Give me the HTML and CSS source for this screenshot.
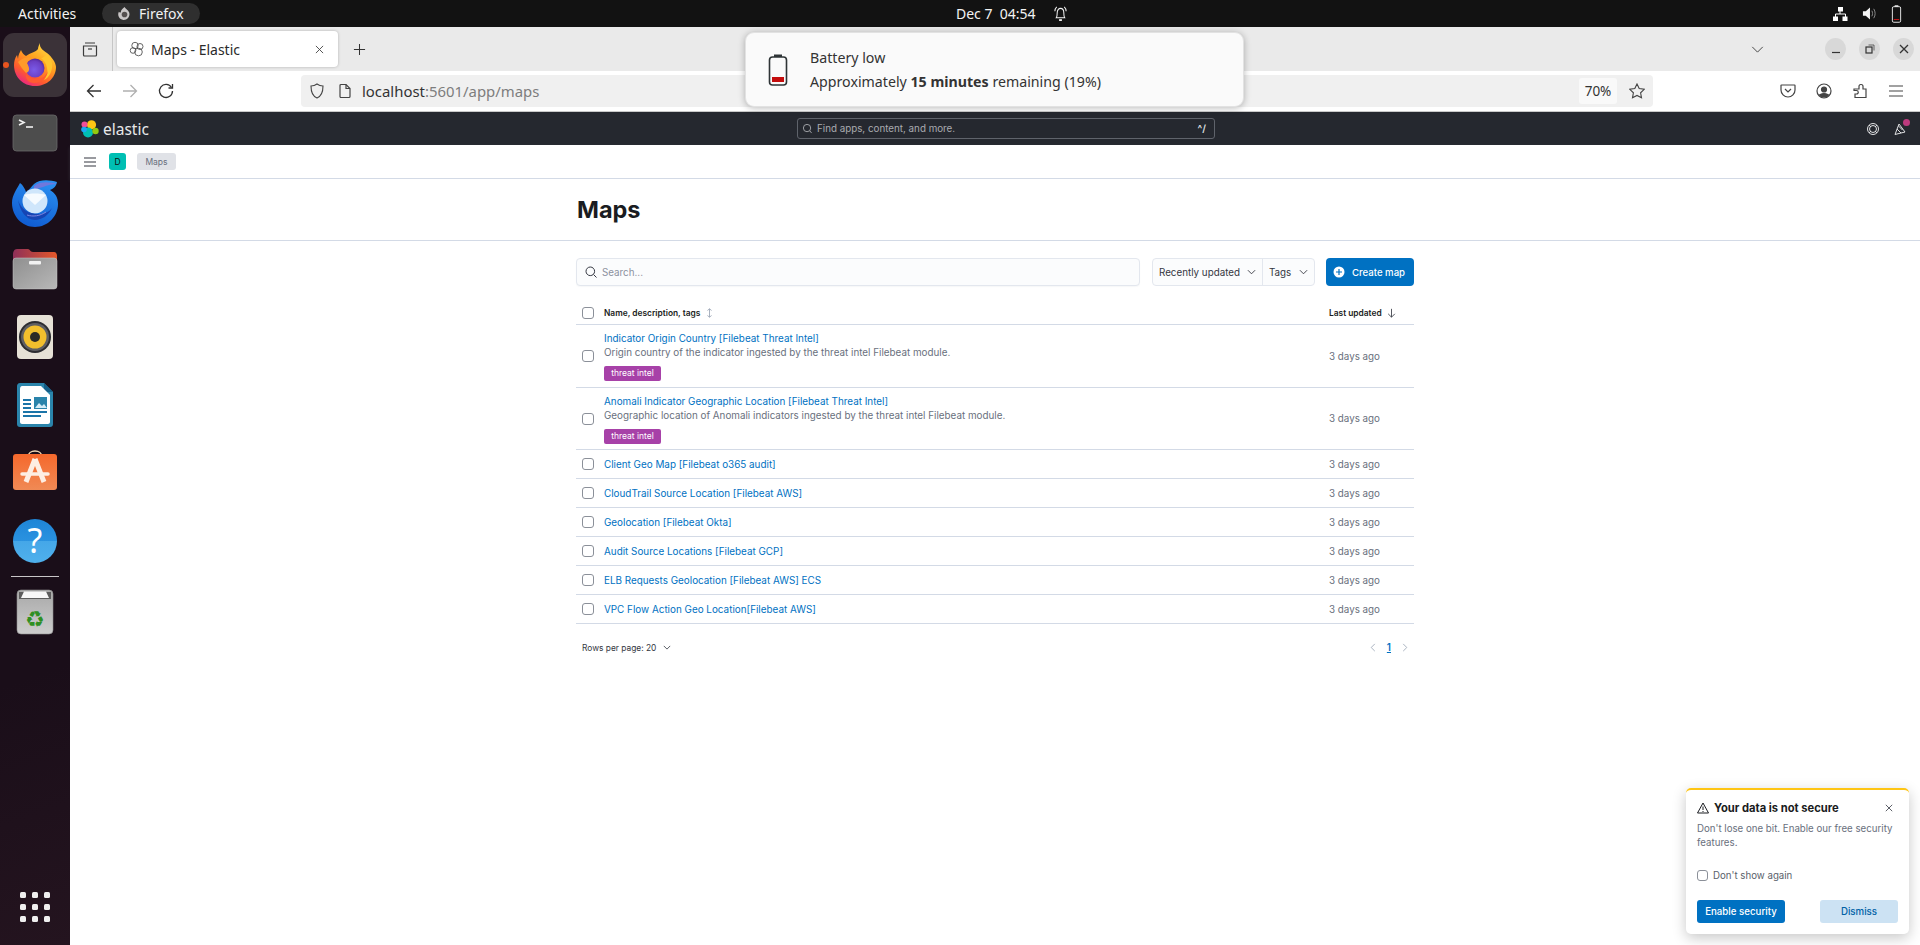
FILE: index.html
```html
<!DOCTYPE html>
<html lang="en">
<head>
<meta charset="utf-8">
<title>Maps - Elastic</title>
<link rel="stylesheet" href="styles.css">
</head>
<body>
<header class="topbar">
  <span class="activities">Activities</span>
  <span class="app-pill">
    <svg class="pill-icon" viewBox="0 0 16 16"><path d="M8 1c1 2 4 3 5 6a6 6 0 1 1-11-1c1 1 1 1 2 1 0-3 2-4 4-6z" fill="#c9c6c6"/><circle cx="8" cy="9" r="3" fill="#55504f"/></svg>
    Firefox
  </span>
  <div class="clock">
    <span>Dec 7&nbsp;&nbsp;04:54</span>
    <svg class="bell" viewBox="0 0 16 18" fill="none" stroke="#f2f2f2" stroke-width="1.1"><path d="M3.500 13c1-1.500 1-3 1-5.500C4.500 5 6 3 8 3s3.500 2 3.500 4.500c0 2.500 0 4 1 5.500z"/><path d="M2 6c0-2 1-3.500 2-4.500M14 6c0-2-1-3.500-2-4.500"/><path d="M6.500 15.500h3" stroke-width="2"/></svg>
  </div>
  <div class="tray">
    <svg class="tray-net" viewBox="0 0 16 16" fill="#fff"><rect x="6" y="1" width="5" height="4.500"/><rect x="1" y="10.500" width="5" height="4.500"/><rect x="10.500" y="10.500" width="5" height="4.500"/><path d="M8 5v3M3.500 11V8h10v3" fill="none" stroke="#fff"/></svg>
    <svg class="tray-vol" viewBox="0 0 16 16"><path d="M1 5.500h3L8.500 1.500v13L4 10.500H1z" fill="#f5f5f5"/><path d="M10.500 5c1 2 1 4 0 6M12.500 3c2 3 2 7 0 10" stroke="#8d8d8d" fill="none"/></svg>
    <svg class="tray-bat" viewBox="0 0 12 20" fill="none"><rect x="1.500" y="2" width="9" height="17" rx="1.500" stroke="#f2f2f2"/><rect x="4" y="0.500" width="4" height="1.500" fill="#f2f2f2"/><rect x="3" y="15.500" width="6" height="1" fill="#d01818"/></svg>
  </div>
</header>

<div class="desktop">
  <nav class="dock">
    <div class="dock-item dock-active">
      <svg viewBox="0 0 70 68">
        <defs>
          <linearGradient id="ffa" x1="0.85" y1="0" x2="0.25" y2="1"><stop offset="0" stop-color="#ffe34d"/><stop offset="0.4" stop-color="#ffa51f"/><stop offset="0.75" stop-color="#ff5a2e"/><stop offset="1" stop-color="#e8218a"/></linearGradient>
          <radialGradient id="ffb" cx="0.45" cy="0.6" r="0.6"><stop offset="0" stop-color="#7a5be8"/><stop offset="0.75" stop-color="#6b3fc4"/><stop offset="1" stop-color="#55299a"/></radialGradient>
        </defs>
        <circle cx="6" cy="34" r="3" fill="#e9541f"/>
        <path d="M40 12c-1 5 4 8 7 10 5 4 9 10 9 14 0 11-9 19-21 19S14 46 14 34c0-4 1-7 3-10l1 4c0-4 2-7 3-9 1 3 3 5 5 6 4-3 10-4 12-7 0-2 1-4 2-6z" fill="url(#ffa)"/>
        <path d="M47 23c4 4 6 9 5 14-1 6-4 10-8 12 3-4 4-8 3-12-1-5-3-8-6-10 2 0 4-2 6-4z" fill="#ffc42e"/>
        <circle cx="35" cy="37" r="9.500" fill="url(#ffb)"/>
        <path d="M18 31c4-4 10-6 15-3-3 0-5 2-6 4 2 4 4 8-1 10-4-4-6-8-8-11z" fill="#ff9a2a"/>
        <path d="M26 43c3 4 7 5 11 5 5 0 9-3 11-8-1 7-7 12-14 12-5 0-9-4-8-9z" fill="#ff5c30"/>
      </svg>
    </div>
    <div class="dock-item">
      <svg viewBox="0 0 70 68"><rect x="13" y="16" width="44" height="36" rx="3.500" fill="#4d4d4d" stroke="#6a6a6a" stroke-width="0.800"/><path d="M19 21l5 2.500-5 2.500" fill="none" stroke="#f2f2f2" stroke-width="1.600"/><path d="M26 28h7" stroke="#f2f2f2" stroke-width="1.600"/></svg>
    </div>
    <div class="dock-item">
      <svg viewBox="0 0 70 68">
        <defs><linearGradient id="tb" x1="0.7" y1="0" x2="0.3" y2="1"><stop offset="0" stop-color="#2a8ff0"/><stop offset="1" stop-color="#0f5ad0"/></linearGradient></defs>
        <path d="M20 16c-3 6-8 12-8 20 0 13 10 24 23 24s23-11 23-23c0-7-3-11-8-14 3-1 6-3 7-8-7-2-17-3-23 2-3 3-5 6-8 8-1-3-3-7-6-9z" fill="url(#tb)"/>
        <path d="M34 19c6-5 16-4 23-2-4 0-10 1-14 3-4 1-7 2-9 5z" fill="#6f78dc"/>
        <circle cx="35" cy="34" r="12.500" fill="#cfe6fb"/>
        <path d="M24 28c6-2 16-2 22 0l-11 10z" fill="#f6fbff"/>
        <path d="M18 33c3 9 10 14 20 14 6 0 11-2 14-6-3 7-10 12-17 12-9 0-15-9-17-20z" fill="#1645b4"/>
        <path d="M27 48c6 2 13 1 19-3" stroke="#7f85e0" fill="none"/>
      </svg>
    </div>
    <div class="dock-item">
      <svg viewBox="0 0 70 68">
        <defs><linearGradient id="fo" x1="0" y1="0" x2="1" y2="0"><stop offset="0" stop-color="#8e2f58"/><stop offset="1" stop-color="#e4582a"/></linearGradient><linearGradient id="fg" x1="0" y1="0" x2="1" y2="1"><stop offset="0" stop-color="#8f8f8f"/><stop offset="1" stop-color="#b8b8b8"/></linearGradient></defs>
        <path d="M13 20c0-3 1-6 4-6h11c2 0 2 3 5 3h21c2 0 3 2 3 4v8H13z" fill="url(#fo)"/>
        <rect x="13" y="23" width="44" height="31" rx="3" fill="url(#fg)" stroke="#c9c9c9" stroke-width="0.500"/>
        <rect x="29" y="26" width="12" height="3.500" rx="1" fill="#f2f2f2"/>
      </svg>
    </div>
    <div class="dock-item">
      <svg viewBox="0 0 70 68"><rect x="17" y="12" width="36" height="44" rx="4" fill="#e6e1d6"/><circle cx="35" cy="34" r="16" fill="#2c2c30"/><circle cx="35" cy="34" r="14" fill="#5f5f62"/><circle cx="35" cy="34" r="11.500" fill="#f2bf2d"/><circle cx="35" cy="34" r="5" fill="#2c2a26"/></svg>
    </div>
    <div class="dock-item">
      <svg viewBox="0 0 70 68"><path d="M17 15c0-1.500 1-3 3-3h24l9 9v32c0 2-1 3-3 3H20c-2 0-3-1-3-3z" fill="#2a84ab"/><path d="M44 12l9 9h-9z" fill="#155f88"/><path d="M20 18c0-2 1-3 2-3h19l9 9v27c0 1-1 2-2 2H22c-1 0-2-1-2-2z" fill="#fff"/><path d="M23 29h8M23 33h8M23 37h8M23 41h24M23 45h18" stroke="#1b74a8" stroke-width="1.800"/><rect x="34" y="26" width="13" height="12" fill="#2a84ab"/><path d="M35 37l4-5 3 3 2-2 3 4z" fill="#d5edf8"/></svg>
    </div>
    <div class="dock-item">
      <svg viewBox="0 0 70 68">
        <defs><linearGradient id="st" x1="0" y1="0" x2="0" y2="1"><stop offset="0" stop-color="#f5682c"/><stop offset="1" stop-color="#f08a55"/></linearGradient></defs>
        <path d="M28 18c0-8 14-8 14 0" fill="none" stroke="#f2d9b6" stroke-width="1.500"/>
        <rect x="13" y="15" width="44" height="36" rx="3" fill="url(#st)"/>
        <path d="M35 20L26 43M35 20l9 23" stroke="#fdeee3" stroke-width="5" fill="none"/>
        <path d="M22 35h26" stroke="#fdeee3" stroke-width="3.500" stroke-linecap="round"/>
      </svg>
    </div>
    <div class="dock-item">
      <svg viewBox="0 0 70 68">
        <defs><linearGradient id="hp" x1="0" y1="0" x2="0" y2="1"><stop offset="0" stop-color="#1f85d6"/><stop offset="0.5" stop-color="#2a92e0"/><stop offset="0.5" stop-color="#45a7e8"/><stop offset="1" stop-color="#4fb0ec"/></linearGradient></defs>
        <circle cx="35" cy="34" r="22" fill="url(#hp)"/>
        <text class="help-mark" x="35" y="46" text-anchor="middle">?</text>
      </svg>
    </div>
    <div class="dock-sep"></div>
    <div class="dock-item">
      <svg viewBox="0 0 70 68">
        <defs><linearGradient id="tr" x1="0" y1="0" x2="0" y2="1"><stop offset="0" stop-color="#a8a8a8"/><stop offset="1" stop-color="#cdcdcd"/></linearGradient></defs>
        <rect x="17" y="11" width="36" height="44" rx="4" fill="url(#tr)" stroke="#8e8e8e" stroke-width="0.600"/>
        <path d="M19 13h32v7H19z" fill="#5c5c5c"/>
        <path d="M24 12.500h22l3 6.500H21z" fill="#f7f7f7"/>
        <text class="recycle" x="35" y="48" text-anchor="middle">&#9851;</text>
      </svg>
    </div>
    <div class="dock-grid"><i></i><i></i><i></i><i></i><i></i><i></i><i></i><i></i><i></i></div>
  </nav>

  <div class="browser">
    <div class="tabstrip">
      <div class="view-btn">
        <svg class="ico16" viewBox="0 0 16 16" fill="none" stroke="#3b3b3b" stroke-width="1.200"><path d="M3 2h10M1.500 5h13v9a1 1 0 0 1-1 1h-11a1 1 0 0 1-1-1z"/><path d="M6 8h4"/></svg>
      </div>
      <div class="tab">
        <svg class="ico16" viewBox="0 0 16 16" fill="none" stroke="#555" stroke-width="0.900"><circle cx="6" cy="4.500" r="3.200"/><circle cx="11" cy="5.500" r="3"/><circle cx="4" cy="9.500" r="2.800"/><circle cx="9.500" cy="11" r="3.800"/></svg>
        <span class="tab-title">Maps - Elastic</span>
        <svg class="tab-x" viewBox="0 0 10 10" stroke="#444" stroke-width="1"><path d="M1 1l8 8M9 1l-8 8"/></svg>
      </div>
      <svg class="tab-plus" viewBox="0 0 14 14" stroke="#333" stroke-width="1.100"><path d="M7 1v12M1 7h12"/></svg>
      <svg class="tab-list" viewBox="0 0 14 8" fill="none" stroke="#444" stroke-width="1.100"><path d="M1 1l6 6 6-6"/></svg>
      <div class="win-btn win-first"><svg viewBox="0 0 12 12" stroke="#333" stroke-width="1.200"><path d="M2 9.500h8"/></svg></div>
      <div class="win-btn"><svg viewBox="0 0 12 12" fill="none" stroke="#333"><rect x="2" y="4" width="6" height="6" stroke-width="1.200"/><path d="M4.500 2h5.500v5.500" stroke-width="0.700"/></svg></div>
      <div class="win-btn"><svg viewBox="0 0 12 12" stroke="#333" stroke-width="1.300"><path d="M2 2l8 8M10 2l-8 8"/></svg></div>
    </div>

    <div class="navbar">
      <svg class="nav-ico" viewBox="0 0 16 16" fill="none" stroke="#333" stroke-width="1.300"><path d="M15 8H1.500M7.500 2l-6 6 6 6"/></svg>
      <svg class="nav-ico" viewBox="0 0 16 16" fill="none" stroke="#b0b0b0" stroke-width="1.300"><path d="M1 8h13.500M8.500 2l6 6-6 6"/></svg>
      <svg class="nav-ico" viewBox="0 0 16 16" fill="none" stroke="#333" stroke-width="1.300"><path d="M13.500 4.500A6.500 6.500 0 1 0 14.500 8"/><path d="M14.500 1v4h-4"/></svg>
      <div class="urlbar">
        <svg class="url-shield" viewBox="0 0 16 16" fill="none" stroke="#444" stroke-width="1.100"><path d="M8 1c2 1.500 4 2 6 2 0 6-1 10-6 12C3 13 2 9 2 3c2 0 4-.5 6-2z"/></svg>
        <svg class="url-page" viewBox="0 0 14 16" fill="none" stroke="#444" stroke-width="1.200"><path d="M2 2.500a1 1 0 0 1 1-1h5l4 4v8a1 1 0 0 1-1 1H3a1 1 0 0 1-1-1z"/><path d="M8 1.500v4h4"/></svg>
        <span class="url-text">localhost<span class="url-dim">:5601/app/maps</span></span>
        <span class="url-zoom">70%</span>
        <svg class="url-star" viewBox="0 0 16 16" fill="none" stroke="#444" stroke-width="1.100"><path d="M8 1l2.200 4.600 5 .7-3.600 3.500.9 5L8 12.400 3.500 14.800l.9-5L.8 6.300l5-.7z"/></svg>
      </div>
      <svg class="nav-ico nav-pocket" viewBox="0 0 16 16" fill="none" stroke="#444" stroke-width="1.200"><path d="M1.500 2h13a.5.500 0 0 1 .5.500V7a7 7 0 0 1-14 0V2.500a.5.500 0 0 1 .5-.5z"/><path d="M5 6l3 3 3-3"/></svg>
      <svg class="nav-ico" viewBox="0 0 16 16" fill="none" stroke="#444" stroke-width="1.200"><circle cx="8" cy="8" r="7"/><circle cx="8" cy="6.500" r="2.500" fill="#444"/><path d="M3.500 12c2-2 7-2 9 0l-2 2h-5z" fill="#444"/></svg>
      <svg class="nav-ico" viewBox="0 0 16 16" fill="none" stroke="#444" stroke-width="1.200"><path d="M9 1.500a1.800 1.800 0 0 1 2 1.700V6h3v8.500H3V11h1.500a1.700 1.700 0 0 0 0-3.500H2V6h5V3.200a1.800 1.800 0 0 1 2-1.700z"/></svg>
      <svg class="nav-ico" viewBox="0 0 16 16" stroke="#444" stroke-width="1.200"><path d="M1 3h14M1 8h14M1 13h14"/></svg>
    </div>

    <div class="kbn-head">
      <svg class="kbn-logo" viewBox="0 0 18 18">
        <circle cx="10.500" cy="4.800" r="4.600" fill="#fec514"/>
        <circle cx="3.500" cy="4.500" r="3" fill="#f04e98"/>
        <circle cx="7" cy="12.500" r="5" fill="#00bfb3"/>
        <circle cx="14.500" cy="11" r="3.200" fill="#93c90e"/>
        <circle cx="3" cy="9.500" r="2.800" fill="#1ba9f5"/>
      </svg>
      <span class="kbn-word">elastic</span>
      <div class="kbn-search">
        <svg class="kbn-search-ico" viewBox="0 0 12 12" fill="none" stroke="#a6a8ad"><circle cx="5.500" cy="5.500" r="4"/><path d="M8.500 8.500l2 2.500"/></svg>
        <span class="kbn-search-text">Find apps, content, and more.</span>
        <span class="kbn-kbd">^/</span>
      </div>
      <svg class="kbn-help" viewBox="0 0 14 14" fill="none" stroke="#dfe0e2"><circle cx="7" cy="7" r="5.500"/><circle cx="7" cy="7" r="3.500"/><path d="M3 3l2 2M11 3L9 5M3 11l2-2M11 11L9 9"/></svg>
      <span class="kbn-news">
        <svg viewBox="0 0 14 14" fill="none" stroke="#dfe0e2"><path d="M2 12.500L6 2l6 8z"/><path d="M4 7l4 4M5.500 4l4 4"/></svg>
        <i class="kbn-dot"></i>
      </span>
    </div>

    <div class="crumbs">
      <svg class="crumb-menu" viewBox="0 0 12 10" stroke="#343741" stroke-width="1.200"><path d="M0 1h12M0 5h12M0 9h12"/></svg>
      <span class="space-badge">D</span>
      <span class="crumb-chip">Maps</span>
    </div>

    <main class="page">
      <div class="page-head"><div class="page-head-in"><h1>Maps</h1></div></div>
      <div class="content">
        <div class="controls">
          <div class="searchbox">
            <svg class="ico12" viewBox="0 0 12 12" fill="none" stroke="#343741"><circle cx="5.300" cy="5.300" r="4.300"/><path d="M8.500 8.500L11.500 11.500"/></svg>
            <span>Search...</span>
          </div>
          <div class="filters">
            <span class="filter filter-a">Recently updated <svg class="chev" viewBox="0 0 10 6" fill="none" stroke="#343741"><path d="M1 1l4 4 4-4"/></svg></span>
            <span class="filter filter-b">Tags <svg class="chev" viewBox="0 0 10 6" fill="none" stroke="#343741"><path d="M1 1l4 4 4-4"/></svg></span>
          </div>
          <div class="create">
            <svg class="ico12" viewBox="0 0 12 12"><circle cx="6" cy="6" r="5.500" fill="#fff"/><path d="M6 3v6M3 6h6" stroke="#0071c2" stroke-width="1.200"/></svg>
            <span>Create map</span>
          </div>
        </div>

        <div class="thead row">
          <span class="check"></span>
          <span class="th">Name, description, tags <svg class="sort" viewBox="0 0 8 12" fill="none" stroke="#98a2b3"><path d="M4 1v10M1.500 3L4 1l2.500 2M1.500 9L4 11l2.500-2"/></svg></span>
          <span class="th">Last updated <svg class="sort" viewBox="0 0 10 12" fill="none" stroke="#343741"><path d="M5 1v10M1 7l4 4 4-4"/></svg></span>
        </div>

        <div class="row row-tall">
          <span class="check"></span>
          <div class="cell">
            <a class="link">Indicator Origin Country [Filebeat Threat Intel]</a>
            <p class="desc">Origin country of the indicator ingested by the threat intel Filebeat module.</p>
            <span class="tag">threat intel</span>
          </div>
          <span class="ago">3 days ago</span>
        </div>
        <div class="row row-tall row-tall-b">
          <span class="check"></span>
          <div class="cell">
            <a class="link">Anomali Indicator Geographic Location [Filebeat Threat Intel]</a>
            <p class="desc">Geographic location of Anomali indicators ingested by the threat intel Filebeat module.</p>
            <span class="tag">threat intel</span>
          </div>
          <span class="ago">3 days ago</span>
        </div>
        <div class="row row-s"><span class="check"></span><a class="link">Client Geo Map [Filebeat o365 audit]</a><span class="ago">3 days ago</span></div>
        <div class="row row-s"><span class="check"></span><a class="link">CloudTrail Source Location [Filebeat AWS]</a><span class="ago">3 days ago</span></div>
        <div class="row row-s"><span class="check"></span><a class="link">Geolocation [Filebeat Okta]</a><span class="ago">3 days ago</span></div>
        <div class="row row-s"><span class="check"></span><a class="link">Audit Source Locations [Filebeat GCP]</a><span class="ago">3 days ago</span></div>
        <div class="row row-s"><span class="check"></span><a class="link">ELB Requests Geolocation [Filebeat AWS] ECS</a><span class="ago">3 days ago</span></div>
        <div class="row row-s"><span class="check"></span><a class="link">VPC Flow Action Geo Location[Filebeat AWS]</a><span class="ago">3 days ago</span></div>

        <div class="pager">
          <span class="rows-per">Rows per page: 20 <svg class="chev-s" viewBox="0 0 10 6" fill="none" stroke="#343741"><path d="M1 1l4 4 4-4"/></svg></span>
          <span class="pages">
            <svg class="pg-ch" viewBox="0 0 6 10" fill="none" stroke="#a2abba"><path d="M5 1L1 5l4 4"/></svg>
            <a class="pg-num">1</a>
            <svg class="pg-ch" viewBox="0 0 6 10" fill="none" stroke="#a2abba"><path d="M1 1l4 4-4 4"/></svg>
          </span>
        </div>
      </div>
    </main>
  </div>
</div>

<aside class="notice">
  <svg class="notice-bat" viewBox="0 0 20 32" fill="none"><rect x="1.500" y="3" width="17" height="28" rx="3" stroke="#2e3436" stroke-width="1.600"/><rect x="6" y="0.500" width="8" height="2.500" fill="#2e3436"/><rect x="4" y="23" width="12" height="5" fill="#c40d0d"/></svg>
  <div class="notice-body">
    <div class="notice-title">Battery low</div>
    <div class="notice-text">Approximately <b>15 minutes</b> remaining (19%)</div>
  </div>
</aside>

<aside class="toast">
  <div class="toast-head">
    <svg class="ico12" viewBox="0 0 12 12" fill="none" stroke="#1a1c21"><path d="M6 1l5.500 10H.5z"/><path d="M6 4.500v3.500M6 9v1"/></svg>
    <strong>Your data is not secure</strong>
    <svg class="toast-x" viewBox="0 0 10 10" stroke="#343741"><path d="M1 1l8 8M9 1l-8 8"/></svg>
  </div>
  <p class="toast-text">Don't lose one bit. Enable our free security features.</p>
  <label class="toast-check"><span class="check"></span>Don't show again</label>
  <div class="toast-btns">
    <span class="btn-primary">Enable security</span>
    <span class="btn-soft">Dismiss</span>
  </div>
</aside>
</body>
</html>
```
FILE: styles.css
```css
* { box-sizing: border-box; }
html, body { margin: 0; height: 100%; }
body { width: 1920px; height: 945px; overflow: hidden; display: flex; flex-direction: column; font-family: Inter, "Liberation Sans", sans-serif; background: #fff; position: relative; }
svg { display: block; flex: none; }
p, h1 { margin: 0; }

/* GNOME top bar */
.topbar { height: 27px; flex: none; background: #121212; color: #f2f2f2; display: flex; align-items: center; font-family: "Noto Sans", sans-serif; font-size: 14px; }
.activities { margin-left: 18px; width: 84px; }
.app-pill { display: flex; align-items: center; gap: 7px; width: 98px; height: 21px; border-radius: 11px; background: #2f2f2f; padding-left: 15px; }
.pill-icon { width: 15px; height: 15px; }
.clock { margin-left: 756px; display: flex; align-items: center; gap: 17px; }
.bell { width: 15px; height: 18px; }
.tray { margin-left: auto; display: flex; align-items: center; gap: 14px; padding-right: 18px; }
.tray-net { width: 16px; height: 16px; }
.tray-vol { width: 15px; height: 15px; }
.tray-bat { width: 11px; height: 20px; }

.desktop { flex: 1; display: flex; min-height: 0; }

/* Dock */
.dock { width: 70px; flex: none; background: linear-gradient(160deg, #1a0e19 70%, #24141f); display: flex; flex-direction: column; padding-top: 4px; }
.dock-item { height: 68px; flex: none; }
.dock-item svg { width: 70px; height: 68px; }
.dock-active { margin: 2px 3px; width: 64px; height: 64px; background: #3b3238; border-radius: 11px; }
.dock-active svg { margin: -2px 0 0 -3px; }
.dock-sep { height: 1px; margin: 1px 11px 2px; background: #c8c5c7; flex: none; }
.help-mark { font-family: "Noto Sans", sans-serif; font-size: 34px; fill: #fff; }
.recycle { font-family: "DejaVu Sans", sans-serif; font-size: 22px; fill: #2f8f22; }
.dock-grid { margin-top: auto; margin-bottom: 23px; padding-left: 20px; display: grid; grid-template-columns: repeat(3, 6px); gap: 6px; }
.dock-grid i { width: 6px; height: 6px; border-radius: 1.500px; background: #efefef; }

/* Browser */
.browser { flex: 1; min-width: 0; display: flex; flex-direction: column; }
.tabstrip { height: 44px; flex: none; background: #eaeaea; display: flex; align-items: center; }
.view-btn { width: 43px; height: 44px; border-right: 1px solid #c6c6c6; padding-left: 12px; display: flex; align-items: center; }
.ico16 { width: 16px; height: 16px; }
.tab { margin-left: 4px; width: 221px; height: 36px; background: #fff; border-radius: 4px; box-shadow: 0 0 3px rgba(0,0,0,.25); display: flex; align-items: center; padding-left: 12px; font-family: "Noto Sans", sans-serif; font-size: 14px; color: #2b2b2b; }
.tab-title { margin-left: 6px; }
.tab-x { width: 9px; height: 9px; margin-left: auto; margin-right: 14px; }
.tab-plus { width: 13px; height: 13px; margin-left: 15px; }
.tab-list { width: 13px; height: 7px; margin-left: 1385px; }
.win-btn { width: 21px; height: 22px; border-radius: 50%; background: #d8d8d8; display: flex; align-items: center; justify-content: center; margin-left: 13px; }
.win-first { margin-left: 61px; }
.win-btn svg { width: 12px; height: 12px; }

.navbar { height: 41px; flex: none; background: #fff; border-bottom: 1px solid #c9c9c9; display: flex; align-items: center; padding-left: 16px; }
.nav-ico { width: 16px; height: 16px; margin-right: 20px; }
.nav-ico:last-child { margin-right: 0; }
.urlbar { flex: none; margin-left: 107px; width: 1352px; height: 32px; background: #f0f0f0; border-radius: 4px; display: flex; align-items: center; padding-left: 8px; font-family: "Noto Sans", sans-serif; font-size: 14.900px; color: #333; }
.url-shield { width: 16px; height: 16px; }
.url-page { width: 14px; height: 16px; margin-left: 13px; }
.url-text { margin-left: 10px; }
.url-dim { color: #7d7d7d; }
.url-zoom { margin-left: auto; width: 38px; height: 26px; border-radius: 3px; background: #f9f9f9; display: flex; align-items: center; justify-content: center; font-size: 13.500px; }
.url-star { width: 16px; height: 16px; margin: 0 8px 0 12px; }
.nav-pocket { margin-left: 127px; }

.kbn-head { height: 33px; flex: none; background: #25282f; display: flex; align-items: center; padding-left: 11px; }
.kbn-logo { width: 18px; height: 18px; }
.kbn-word { margin-left: 4px; font-family: "Noto Sans", sans-serif; font-size: 15.500px; color: #e8e8ea; width: 694px; }
.kbn-search { width: 418px; height: 21px; border: 1px solid #5f636b; border-radius: 3px; display: flex; align-items: center; padding: 0 8px 0 4px; font-size: 9.800px; color: #a9abb0; }
.kbn-search-ico { width: 11px; height: 11px; }
.kbn-search-text { margin-left: 4px; }
.kbn-kbd { margin-left: auto; color: #dfe0e2; font-weight: 600; }
.kbn-help { width: 14px; height: 14px; margin-left: 651px; }
.kbn-news { margin-left: 13px; width: 14px; height: 14px; position: relative; }
.kbn-news svg { width: 14px; height: 14px; }
.kbn-dot { position: absolute; right: -3px; top: -3px; width: 7px; height: 7px; border-radius: 50%; background: #bd3a7e; }

.crumbs { height: 34px; flex: none; background: #fff; border-bottom: 1px solid #d3dae6; box-shadow: 0 2px 4px rgba(152,162,179,.18); display: flex; align-items: center; padding-left: 14px; }
.crumb-menu { width: 12px; height: 10px; }
.space-badge { margin-left: 13px; width: 17px; height: 17px; border-radius: 3px; background: #00bfb3; font-size: 8.500px; display: flex; align-items: center; justify-content: center; color: #111; }
.crumb-chip { margin-left: 11px; width: 39px; height: 17px; border-radius: 3px; background: #e0e2e7; font-size: 8.500px; display: flex; align-items: center; justify-content: center; color: #69707d; }

/* Page */
.page { flex: 1; min-height: 0; background: #fff; }
.page-head { height: 62px; border-bottom: 1px solid #d3dae6; }
.page-head-in { width: 840px; margin: 0 auto; height: 100%; display: flex; align-items: center; }
h1 { font-size: 23.500px; font-weight: 700; color: #1a1c21; padding-left: 2px; }
.content { width: 840px; margin: 0 auto; padding: 17px 1px 0; font-size: 9.800px; color: #343741; }
.controls { display: flex; height: 28px; }
.searchbox { width: 564px; border: 1px solid #e3e7ee; border-radius: 4px; background: #fbfcfd; display: flex; align-items: center; gap: 5px; padding-left: 8px; color: #8b919d; box-shadow: 0 1px 1px rgba(152,162,179,.08); }
.ico12 { width: 12px; height: 12px; }
.filters { margin-left: 12px; width: 163px; border: 1px solid #e3e7ee; border-radius: 4px; background: #fbfcfd; display: flex; align-items: center; color: #343741; }
.filter { height: 100%; display: flex; align-items: center; }
.filter-a { width: 110px; padding: 0 6px; border-right: 1px solid #e3e7ee; justify-content: space-between; }
.filter-b { flex: 1; padding: 0 6px; justify-content: space-between; }
.chev { width: 9px; height: 6px; }
.create { margin-left: 11px; width: 88px; border-radius: 4px; background: #0071c2; color: #fff; display: flex; align-items: center; gap: 7px; padding-left: 7px; font-weight: 500; font-size: 9.600px; }

.row { display: grid; grid-template-columns: 28px 1fr 85px; align-items: center; border-bottom: 1px solid #d3dae6; }
.thead { height: 23px; margin-top: 16px; font-weight: 600; font-size: 8.400px; color: #1a1c21; }
.th { display: flex; align-items: center; gap: 5px; }
.sort { width: 9px; height: 10px; }
.check { display: block; width: 12px; height: 12px; border: 1px solid #8b9099; border-radius: 3px; background: #fff; margin-left: 6px; }
.row-tall { height: 63px; }
.row-tall-b { height: 62px; }
.cell { padding-top: 6px; height: 100%; }
.link { display: block; line-height: 14px; color: #0071c2; font-size: 9.900px; }
.desc { line-height: 14px; color: #69707d; font-size: 9.850px; }
.tag { display: block; margin-top: 7px; width: 57px; height: 15px; border-radius: 2px; background: #a741a8; color: #fff; font-size: 8.500px; line-height: 15px; text-align: center; }
.ago { color: #69707d; }
.row-s { height: 29px; }
.pager { height: 47px; display: flex; align-items: center; justify-content: space-between; padding-left: 6px; font-size: 8.400px; color: #343741; }
.rows-per { display: flex; align-items: center; gap: 7px; }
.chev-s { width: 8px; height: 5px; }
.pages { display: flex; align-items: center; gap: 11px; padding-right: 6px; }
.pg-ch { width: 6px; height: 9px; }
.pg-num { color: #0071c2; text-decoration: underline; font-weight: 600; font-size: 9.800px; }

/* Battery notification */
.notice { position: absolute; left: 745px; top: 32px; width: 499px; height: 75px; background: #fafafa; border-radius: 9px; border: 1px solid #e2e2e2; box-shadow: 0 1px 7px rgba(0,0,0,.28); display: flex; align-items: center; padding-left: 22px; font-family: "Noto Sans", sans-serif; color: #333; font-size: 14.200px; }
.notice-bat { width: 20px; height: 32px; }
.notice-body { margin-left: 22px; display: flex; flex-direction: column; gap: 4px; }
.notice-title { line-height: 20px; }
.notice-text { line-height: 20px; }

/* Security toast */
.toast { position: absolute; right: 11px; bottom: 11px; width: 223px; height: 146px; background: #fff; border-top: 2px solid #fec514; border-radius: 5px; box-shadow: 0 4px 14px rgba(0,0,0,.22); padding: 10px 11px 0; font-size: 9.700px; color: #5a5f6b; }
.toast-head { display: flex; align-items: center; gap: 5px; height: 16px; }
.toast-head strong { font-size: 11.200px; font-weight: 700; color: #1a1c21; }
.toast-x { width: 8px; height: 8px; margin-left: auto; margin-right: 5px; }
.toast-text { margin-top: 6px; line-height: 14px; color: #69707d; width: 200px; }
.toast-check { display: flex; align-items: center; gap: 5px; margin-top: 18px; height: 14px; color: #5a5f6b; }
.toast-check .check { margin-left: 0; width: 11px; height: 11px; }
.toast-btns { margin-top: 18px; display: flex; justify-content: space-between; }
.btn-primary { width: 88px; height: 23px; border-radius: 3px; background: #0071c2; color: #fff; display: flex; align-items: center; justify-content: center; font-weight: 500; }
.btn-soft { width: 78px; height: 23px; border-radius: 3px; background: #cce2f3; color: #0061a6; display: flex; align-items: center; justify-content: center; font-weight: 500; }
```
